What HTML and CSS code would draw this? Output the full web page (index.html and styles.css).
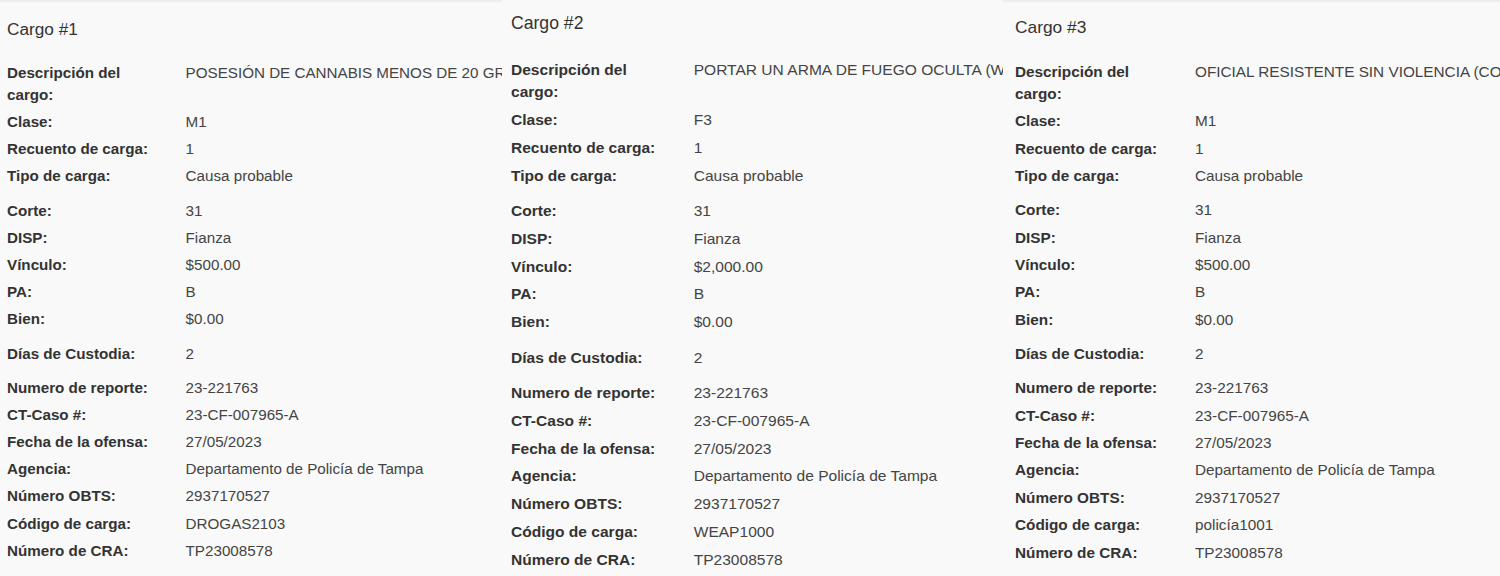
FILE: index.html
```html
<!DOCTYPE html>
<html lang="es">
<head>
  <meta charset="UTF-8">
  <meta name="viewport" content="width=device-width, initial-scale=1.0">
  <title>Cargos</title>
  <link rel="stylesheet" href="styles.css">
</head>
<body>
  <main class="charges">

    <!-- Cargo 1 -->
    <section class="charge charge-one">
      <h2 class="charge-title">Cargo #1</h2>
      <dl class="fields">
        <dt>Descripción del cargo:</dt>
        <dd>POSESIÓN DE CANNABIS MENOS DE 20 GRAMOS</dd>
        <dt>Clase:</dt><dd>M1</dd>
        <dt>Recuento de carga:</dt><dd>1</dd>
        <dt>Tipo de carga:</dt><dd>Causa probable</dd>
      </dl>
      <dl class="fields">
        <dt>Corte:</dt><dd>31</dd>
        <dt>DISP:</dt><dd>Fianza</dd>
        <dt>Vínculo:</dt><dd>$500.00</dd>
        <dt>PA:</dt><dd>B</dd>
        <dt>Bien:</dt><dd>$0.00</dd>
      </dl>
      <dl class="fields">
        <dt>Días de Custodia:</dt><dd>2</dd>
      </dl>
      <dl class="fields">
        <dt>Numero de reporte:</dt><dd>23-221763</dd>
        <dt>CT-Caso #:</dt><dd>23-CF-007965-A</dd>
        <dt>Fecha de la ofensa:</dt><dd>27/05/2023</dd>
        <dt>Agencia:</dt><dd>Departamento de Policía de Tampa</dd>
        <dt>Número OBTS:</dt><dd>2937170527</dd>
        <dt>Código de carga:</dt><dd>DROGAS2103</dd>
        <dt>Número de CRA:</dt><dd>TP23008578</dd>
      </dl>
    </section>

    <!-- Cargo 2 -->
    <section class="charge charge-two">
      <h2 class="charge-title">Cargo #2</h2>
      <dl class="fields">
        <dt>Descripción del cargo:</dt>
        <dd>PORTAR UN ARMA DE FUEGO OCULTA (WEAPON)</dd>
        <dt>Clase:</dt><dd>F3</dd>
        <dt>Recuento de carga:</dt><dd>1</dd>
        <dt>Tipo de carga:</dt><dd>Causa probable</dd>
      </dl>
      <dl class="fields">
        <dt>Corte:</dt><dd>31</dd>
        <dt>DISP:</dt><dd>Fianza</dd>
        <dt>Vínculo:</dt><dd>$2,000.00</dd>
        <dt>PA:</dt><dd>B</dd>
        <dt>Bien:</dt><dd>$0.00</dd>
      </dl>
      <dl class="fields">
        <dt>Días de Custodia:</dt><dd>2</dd>
      </dl>
      <dl class="fields">
        <dt>Numero de reporte:</dt><dd>23-221763</dd>
        <dt>CT-Caso #:</dt><dd>23-CF-007965-A</dd>
        <dt>Fecha de la ofensa:</dt><dd>27/05/2023</dd>
        <dt>Agencia:</dt><dd>Departamento de Policía de Tampa</dd>
        <dt>Número OBTS:</dt><dd>2937170527</dd>
        <dt>Código de carga:</dt><dd>WEAP1000</dd>
        <dt>Número de CRA:</dt><dd>TP23008578</dd>
      </dl>
    </section>

    <!-- Cargo 3 -->
    <section class="charge charge-three">
      <h2 class="charge-title">Cargo #3</h2>
      <dl class="fields">
        <dt>Descripción del cargo:</dt>
        <dd>OFICIAL RESISTENTE SIN VIOLENCIA (CONTRA)</dd>
        <dt>Clase:</dt><dd>M1</dd>
        <dt>Recuento de carga:</dt><dd>1</dd>
        <dt>Tipo de carga:</dt><dd>Causa probable</dd>
      </dl>
      <dl class="fields">
        <dt>Corte:</dt><dd>31</dd>
        <dt>DISP:</dt><dd>Fianza</dd>
        <dt>Vínculo:</dt><dd>$500.00</dd>
        <dt>PA:</dt><dd>B</dd>
        <dt>Bien:</dt><dd>$0.00</dd>
      </dl>
      <dl class="fields">
        <dt>Días de Custodia:</dt><dd>2</dd>
      </dl>
      <dl class="fields">
        <dt>Numero de reporte:</dt><dd>23-221763</dd>
        <dt>CT-Caso #:</dt><dd>23-CF-007965-A</dd>
        <dt>Fecha de la ofensa:</dt><dd>27/05/2023</dd>
        <dt>Agencia:</dt><dd>Departamento de Policía de Tampa</dd>
        <dt>Número OBTS:</dt><dd>2937170527</dd>
        <dt>Código de carga:</dt><dd>policía1001</dd>
        <dt>Número de CRA:</dt><dd>TP23008578</dd>
      </dl>
    </section>

  </main>
</body>
</html>
```

FILE: styles.css
```css
/* Reset basic styles */
* {
  margin: 0;
  padding: 0;
  box-sizing: border-box;
}

body {
  font-family: 'Liberation Sans', Arial, sans-serif;
  background-color: #f9f9f9;
  color: #333;
  height: 576px;
  overflow: hidden;
}

.charges {
  display: grid;
  grid-template-columns: 502px 501px 497px;
  height: 576px;
}

.charge {
  font-size: 15.2px;
  overflow: hidden;
  background-color: #f9f9f9;
}

.charge-title {
  font-size: 1.133em;
  font-weight: normal;
  line-height: 1.2;
  color: #333;
}

.fields {
  display: grid;
  grid-template-columns: 11.75em minmax(0, 1fr);
  row-gap: 0.34em;
  line-height: 1.447;
  margin-bottom: 0.79em;
}

.fields dt {
  font-weight: bold;
  color: #333;
  padding-right: 1.9em;
}

.fields dd {
  color: #444;
  white-space: nowrap;
}

/* each card was captured at a slightly different zoom and scroll */
.charge-one {
  padding: 18.7px 0 0 7px;
  box-shadow: inset 0 3px 3px -2px rgba(0, 0, 0, 0.09);
}

.charge-one .charge-title {
  margin-bottom: 22.7px;
}

.charge-one .fields {
  margin-bottom: 0.81em;
}

.charge-two {
  font-size: 15.55px;
  padding: 13.4px 0 0 9px;
}

.charge-two .charge-title {
  margin-bottom: 24.2px;
}

.charge-two .fields {
  margin-bottom: 0.84em;
}

.charge-three {
  font-size: 15.32px;
  padding: 16.6px 0 0 12px;
  box-shadow: inset 0 3px 3px -2px rgba(0, 0, 0, 0.09);
}

.charge-three .charge-title {
  margin-bottom: 23.5px;
}
```
